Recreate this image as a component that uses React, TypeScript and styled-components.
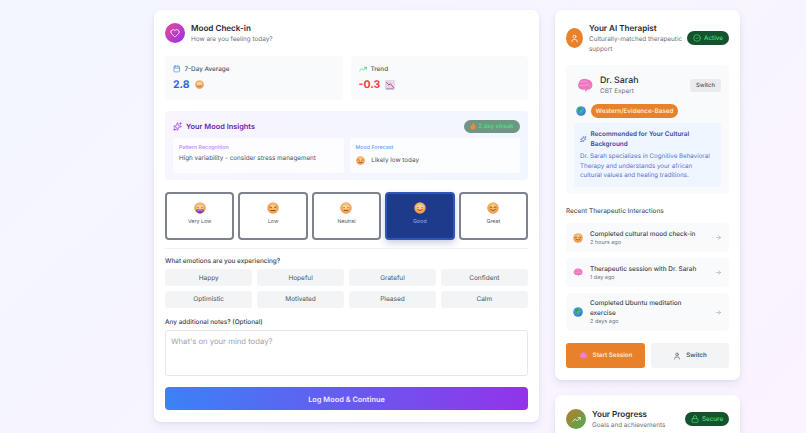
import React from "react";
import styled, { createGlobalStyle } from "styled-components";
import { Heart, Calendar, TrendingUp, Sparkles, User, CircleCheck, ArrowRight, Lock } from "lucide-react";

const Global = createGlobalStyle`
  html, body { margin: 0; padding: 0; height: 433px; overflow: hidden; }
  body { font-family: Inter, "Liberation Sans", sans-serif; color: #1f2937; text-rendering: geometricPrecision; }
  * { box-sizing: border-box; }
`;
const Page = styled.div`
  width: 806px; height: 433px; overflow: hidden;
  background: linear-gradient(135deg, #f3f6ff 0%, #f7f5ff 50%, #fbf3ff 100%);
  display: flex; align-items: flex-start; gap: 16px; padding: 10px 66px 0 154px;
`;
const Card = styled.section`
  background: #fff; border-radius: 7px;
  box-shadow: 0 4px 10px rgba(30, 41, 90, .08), 0 1px 3px rgba(30, 41, 90, .05);
`;
const MainCard = styled(Card)`
  width: 385px; height: 412px; flex: none; padding: 12px 11px;
  display: flex; flex-direction: column;
`;
const Side = styled.div`width: 185px; flex: none; display: flex; flex-direction: column; gap: 15px;`;
const SideCard = styled(Card)<{ $pt: number }>`padding: ${p => p.$pt}px 11px 12px;`;
const Header = styled.header`display: flex; align-items: center; gap: 6px;`;
const IconDisc = styled.div<{ $bg: string; $w?: number; $h?: number }>`
  width: ${p => p.$w ?? 20}px; height: ${p => p.$h ?? 20}px; border-radius: 50%; flex: none;
  background: ${p => p.$bg}; color: #fff; display: flex; align-items: center; justify-content: center;
`;
const HeadText = styled.div`flex: 1; min-width: 0;`;
const Title = styled.h2`margin: 0; font-size: 8.1px; line-height: 12px; font-weight: 600; color: #1f2937;`;
const Sub = styled.p`margin: 0; font-size: 6.35px; line-height: 10px; color: #6b7280; white-space: nowrap;`;
const Stats = styled.div`display: grid; grid-template-columns: 1fr 1fr; gap: 8px; margin-top: 12px;`;
const Stat = styled.div`background: #f9fafb; border-radius: 4px; height: 44px; padding: 8px 8px 0; `;
const StatHead = styled.div`display: flex; align-items: center; gap: 4px; font-size: 6.35px; line-height: 10px; font-weight: 500; color: #4b5563;`;
const StatValue = styled.div<{ $c: string }>`
  display: flex; align-items: center; gap: 5px; margin-top: 3px; font-size: 10.5px; line-height: 15px; font-weight: 700; color: ${p => p.$c};
`;
const Insights = styled.div`
  margin-top: 11px; height: 69px; border-radius: 4px; padding: 7px 8px;
  background: linear-gradient(90deg, #f8f5ff, #f1f6ff); display: flex; flex-direction: column;
`;
const InsightHead = styled.div`display: flex; align-items: center; justify-content: space-between; height: 16px;`;
const InsightTitle = styled.div`display: flex; align-items: center; gap: 4px; font-size: 7.4px; font-weight: 600; color: #6b21a8;`;
const Streak = styled.div`
  display: flex; align-items: center; justify-content: center; gap: 2px;
  width: 56px; height: 13px; border-radius: 7px; background: #6f9583; color: #4ade80; font-size: 6px; font-weight: 600;
`;
const InsightGrid = styled.div`display: grid; grid-template-columns: 1fr 1fr; gap: 6px; margin-top: 4px;`;
const Insight = styled.div`background: rgba(255,255,255,.75); border-radius: 3px; height: 35px; padding: 6px 6px 0;`;
const InsightLabel = styled.div<{ $c: string }>`font-size: 5.3px; line-height: 8px; font-weight: 500; color: ${p => p.$c};`;
const InsightText = styled.div<{ $mt: number }>`display: flex; align-items: center; gap: 5px; font-size: 6.3px; line-height: 11px; color: #4b5563; margin-top: ${p => p.$mt}px;`;
const Moods = styled.div`display: grid; grid-template-columns: repeat(5, 1fr); gap: 4px; margin-top: 12px;`;
const Mood = styled.div<{ $on?: boolean }>`
  height: 48px; border-radius: 4px; display: flex; flex-direction: column; align-items: center; padding-top: 8px; gap: 4px;
  border: 2px solid ${p => p.$on ? "#2d57b8" : "#7d828c"};
  background: ${p => p.$on ? "#1e3a8a" : "#fff"};
  color: ${p => p.$on ? "#93b4f5" : "#4b5563"};
  font-size: 5.3px; line-height: 9px; font-weight: 400;
  box-shadow: ${p => p.$on ? "0 3px 7px rgba(30,58,138,.25)" : "none"};
`;
const Divider = styled.hr`border: 0; border-top: 1px solid #eef0f3; margin: 8px 0 0; width: 100%;`;
const Label = styled.div<{ $top?: number }>`font-size: 6.4px; line-height: 10px; font-weight: 500; color: #374151; margin-top: ${p => p.$top ?? 0}px;`;
const Chips = styled.div`display: grid; grid-template-columns: repeat(4, 1fr); gap: 4.5px; margin-top: 3px;`;
const Chip = styled.div`
  height: 17px; border-radius: 3px; background: #f3f4f6; color: #4b5563; font-size: 6.5px;
  display: flex; align-items: center; justify-content: center;
`;
const Notes = styled.div`
  margin-top: 3px; height: 47px; border-radius: 3px; border: 1px solid #e5e7eb; padding: 6px 5px;
  font-size: 7.7px; line-height: 10px; color: #9ca3af;
`;
const Submit = styled.button`
  border: 0; width: 100%; height: 23px; margin-top: 11px; padding: 1px 0 0; border-radius: 4px; color: #f1ecff; font: 600 7.4px Inter, sans-serif; text-rendering: geometricPrecision;
  background: linear-gradient(90deg, #3b82f6, #9333ea);
`;
const Badge = styled.div<{ $w: number }>`
  width: ${p => p.$w}px; height: 14px; border-radius: 7px; background: #14532d; color: #4ade80; flex: none;
  display: flex; align-items: center; justify-content: center; gap: 3px; font-size: 6.3px; font-weight: 500;
`;
const Therapist = styled.div`background: #f9fafb; border-radius: 4px; margin-top: 11px; height: 129px; padding: 10px 8px 7px;`;
const Doc = styled.div`display: flex; align-items: center; gap: 7px; padding-left: 3px;`;
const DocName = styled.div`font-size: 8.8px; line-height: 11px; font-weight: 500; color: #1f2937;`;
const SmallBtn = styled.div`
  width: 31px; height: 13px; border-radius: 3px; background: #e9ebef; color: #4b5563; font-size: 5.8px; font-weight: 500;
  display: flex; align-items: center; justify-content: center;
`;
const Tradition = styled.div`display: flex; align-items: center; gap: 5px; margin-top: 8px; padding-left: 2px;`;
const Pill = styled.div`
  width: 87px; height: 14px; border-radius: 7px; background: #e8812a; color: #fde9d8; font-size: 6.3px; font-weight: 600;
  display: flex; align-items: center; justify-content: center;
`;
const Recommend = styled.div`background: #eff6ff; border-radius: 3px; margin-top: 5px; height: 64px; padding: 6px 6px;`;
const RecHead = styled.div`display: flex; align-items: center; gap: 4px; font-size: 6.4px; line-height: 10px; font-weight: 600; color: #3c4a9a;`;
const RecBody = styled.p`margin: 3px 0 0; font-size: 6.2px; line-height: 9.7px; color: #5a6fd0;`;
const RecentLabel = styled(Label)`margin-top: 12px; color: #4b5563;`;
const Items = styled.div`display: flex; flex-direction: column; gap: 6px; margin-top: 7px;`;
const Item = styled.div`
  background: #f9fafb; border-radius: 4px; padding: 5px 7px; min-height: 29px; display: flex; align-items: center; gap: 7px;
`;
const ItemText = styled.div`flex: 1; min-width: 0;`;
const ItemTitle = styled.div`font-size: 6.4px; line-height: 10px; font-weight: 500; color: #374151;`;
const ItemTime = styled.div`font-size: 5.5px; line-height: 8px; color: #6b7280;`;
const Actions = styled.div`display: grid; grid-template-columns: 79px 78px; gap: 6px; margin-top: 12px;`;
const Action = styled.div<{ $primary?: boolean }>`
  height: 25px; border-radius: 3px; display: flex; align-items: center; justify-content: center; gap: 5px;
  font-size: 6.2px; font-weight: 600;
  background: ${p => p.$primary ? "#e8812a" : "#f3f4f6"}; color: ${p => p.$primary ? "#fde9d8" : "#4b5563"};
`;

type FaceKind = "vlow" | "low" | "neutral" | "good" | "great";
const Face = ({ kind, size = 12 }: { kind: FaceKind; size?: number }) => {
  const id = "f" + kind + size;
  return (
    <svg width={size} height={size} viewBox="0 0 24 24" style={{ flex: "none" }}>
      <defs>
        <radialGradient id={id} cx=".5" cy=".4" r=".65">
          <stop offset="0" stopColor="#fcd98a" /><stop offset="1" stopColor="#ee8a3e" />
        </radialGradient>
      </defs>
      <circle cx="12" cy="12" r="11.5" fill={`url(#${id})`} />
      {kind === "vlow" && <path d="M4 17c2-3 4-3 8-2 4-1 6-1 8 2-2 4-5 6-8 6s-6-2-8-6z" fill="#7d3fb8" />}
      {kind === "low" ? (
        <><path d="M5.500 10l4 1.500M18.500 10l-4 1.500" stroke="#7a3a1a" strokeWidth="1.5" strokeLinecap="round" /><path d="M8 17h8" stroke="#7a3a1a" strokeWidth="1.8" strokeLinecap="round" /></>
      ) : kind === "great" ? (
        <><path d="M5.500 11q2.500-3 5 0M13.500 11q2.500-3 5 0" stroke="#7a3a1a" strokeWidth="1.6" fill="none" strokeLinecap="round" /><path d="M7 15q5 5 10 0" stroke="#7a3a1a" strokeWidth="1.6" fill="none" strokeLinecap="round" /></>
      ) : (
        <><circle cx="8" cy="10" r="2.600" fill="#fff" /><circle cx="16" cy="10" r="2.600" fill="#fff" /><circle cx="8" cy="10.500" r="1.300" fill="#5b2c12" /><circle cx="16" cy="10.500" r="1.300" fill="#5b2c12" />
          {kind === "good" ? <path d="M7.500 15.500q4.500 4 9 0" stroke="#7a3a1a" strokeWidth="1.6" fill="none" strokeLinecap="round" /> :
            kind === "neutral" ? <path d="M8 16.500q4 1.500 8 0" stroke="#7a3a1a" strokeWidth="1.6" fill="none" strokeLinecap="round" /> :
              <path d="M8 17q4-4 8 0" stroke="#f3c9e0" strokeWidth="1.6" fill="none" strokeLinecap="round" />}</>
      )}
    </svg>
  );
};
const Globe = ({ size = 10, id }: { size?: number; id: string }) => (
  <svg width={size} height={size} viewBox="0 0 24 24" style={{ flex: "none" }}>
    <defs><radialGradient id={id} cx=".4" cy=".35" r=".7"><stop offset="0" stopColor="#58c9d8" /><stop offset="1" stopColor="#2f6fd8" /></radialGradient></defs>
    <circle cx="12" cy="12" r="11.500" fill={`url(#${id})`} />
    <path d="M5 5q5-3 9-1l1 5-5 2-1 6-4-4z M16 13l5-1-2 6-4 2z" fill="#3f9a5c" />
  </svg>
);
const Brain = ({ w = 16, h = 15 }: { w?: number; h?: number }) => (
  <svg width={w} height={h} viewBox="0 0 24 22" style={{ flex: "none" }}>
    <path d="M3 6C5 1 12 0 16 2c5 1 8 5 7 10-1 4-5 6-8 5l-2 4-1-4c-4 1-9 0-10-4-1-3 0-5 1-7z" fill="#ee78c0" />
    <path d="M6 6q4-3 8-1M5 11q5 1 9-1M15 9q3 1 5 4" stroke="#f8a8da" strokeWidth="1.200" fill="none" strokeLinecap="round" />
  </svg>
);
const Chart = () => (
  <svg width="10" height="10" viewBox="0 0 24 24" style={{ flex: "none" }}>
    <rect width="24" height="24" rx="2" fill="#e3d7ea" />
    <path d="M3 5l6 7 4-3 8 10" stroke="#d6456a" strokeWidth="2.400" fill="none" />
    <path d="M3 21h18" stroke="#8f80b0" strokeWidth="2" />
  </svg>
);
const Flame = () => (
  <svg width="6" height="8" viewBox="0 0 12 16"><path d="M6 0c1 3 5 5 5 10a5 5 0 0 1-10 0c0-2 1-3 2-4 0 1 1 2 1.500 2C5 6 5 3 6 0z" fill="#ef8a3c" /></svg>
);

const emotions = ["Happy", "Hopeful", "Grateful", "Confident", "Optimistic", "Motivated", "Pleased", "Calm"];
const moods: [FaceKind, string][] = [["vlow", "Very Low"], ["low", "Low"], ["neutral", "Neutral"], ["good", "Good"], ["great", "Great"]];

export default function App() {
  return (
    <Page>
      <Global />
      <MainCard>
        <Header>
          <IconDisc $bg="linear-gradient(135deg,#ec4899,#9333ea)"><Heart size={10} strokeWidth={2} /></IconDisc>
          <HeadText><Title>Mood Check-in</Title><Sub>How are you feeling today?</Sub></HeadText>
        </Header>
        <Stats>
          <Stat>
            <StatHead><Calendar size={7.5} color="#3b82f6" />7-Day Average</StatHead>
            <StatValue $c="#2f66d8">2.8 <Face kind="neutral" size={9} /></StatValue>
          </Stat>
          <Stat>
            <StatHead><TrendingUp size={8} color="#22c55e" />Trend</StatHead>
            <StatValue $c="#ef4444">-0.3 <Chart /></StatValue>
          </Stat>
        </Stats>
        <Insights>
          <InsightHead>
            <InsightTitle><Sparkles size={9} color="#9333ea" />Your Mood Insights</InsightTitle>
            <Streak><Flame />2 day streak</Streak>
          </InsightHead>
          <InsightGrid>
            <Insight>
              <InsightLabel $c="#c084fc">Pattern Recognition</InsightLabel>
              <InsightText $mt={1}>High variability - consider stress management</InsightText>
            </Insight>
            <Insight>
              <InsightLabel $c="#60a5fa">Mood Forecast</InsightLabel>
              <InsightText $mt={3}><Face kind="low" size={9} />&nbsp;Likely low today</InsightText>
            </Insight>
          </InsightGrid>
        </Insights>
        <Moods>
          {moods.map(([k, l]) => <Mood key={k} $on={k === "good"}><Face kind={k} />{l}</Mood>)}
        </Moods>
        <Divider />
        <Label $top={7}>What emotions are you experiencing?</Label>
        <Chips>{emotions.map(e => <Chip key={e}>{e}</Chip>)}</Chips>
        <Label $top={9}>Any additional notes? (Optional)</Label>
        <Notes>What's on your mind today?</Notes>
        <Submit>Log Mood &amp; Continue</Submit>
      </MainCard>
      <Side>
        <SideCard $pt={12}>
          <Header>
            <IconDisc $bg="#e8812a" $w={17} $h={20}><User size={9} strokeWidth={2} /></IconDisc>
            <HeadText>
              <Title>Your AI Therapist</Title>
              <Sub>Culturally-matched therapeutic<br />support</Sub>
            </HeadText>
            <Badge $w={42}><CircleCheck size={8} />Active</Badge>
          </Header>
          <Therapist>
            <Doc>
              <Brain />
              <HeadText><DocName>Dr. Sarah</DocName><Sub>CBT Expert</Sub></HeadText>
              <SmallBtn>Switch</SmallBtn>
            </Doc>
            <Tradition><Globe id="g1" /><Pill>Western/Evidence-Based</Pill></Tradition>
            <Recommend>
              <RecHead><Sparkles size={6.5} color="#3b5bd8" style={{ flex: "none" }} /><span>Recommended for Your Cultural Background</span></RecHead>
              <RecBody>Dr. Sarah specializes in Cognitive Behavioral Therapy and understands your african cultural values and healing traditions.</RecBody>
            </Recommend>
          </Therapist>
          <RecentLabel>Recent Therapeutic Interactions</RecentLabel>
          <Items>
            <Item><Face kind="great" size={10} /><ItemText><ItemTitle>Completed cultural mood check-in</ItemTitle><ItemTime>2 hours ago</ItemTime></ItemText><ArrowRight size={7} color="#9ca3af" /></Item>
            <Item><Brain w={10} h={9} /><ItemText><ItemTitle>Therapeutic session with Dr. Sarah</ItemTitle><ItemTime>1 day ago</ItemTime></ItemText><ArrowRight size={7} color="#9ca3af" /></Item>
            <Item><Globe id="g2" /><ItemText><ItemTitle>Completed Ubuntu meditation exercise</ItemTitle><ItemTime>2 days ago</ItemTime></ItemText><ArrowRight size={7} color="#9ca3af" /></Item>
          </Items>
          <Actions>
            <Action $primary><Brain w={9} h={8} />Start Session</Action>
            <Action><User size={8} />Switch</Action>
          </Actions>
        </SideCard>
        <SideCard $pt={13}>
          <Header>
            <IconDisc $bg="linear-gradient(135deg,#b97a2a,#4caf50)"><TrendingUp size={9} /></IconDisc>
            <HeadText><Title>Your Progress</Title><Sub>Goals and achievements</Sub></HeadText>
            <Badge $w={44}><Lock size={8} />Secure</Badge>
          </Header>
        </SideCard>
      </Side>
    </Page>
  );
}
